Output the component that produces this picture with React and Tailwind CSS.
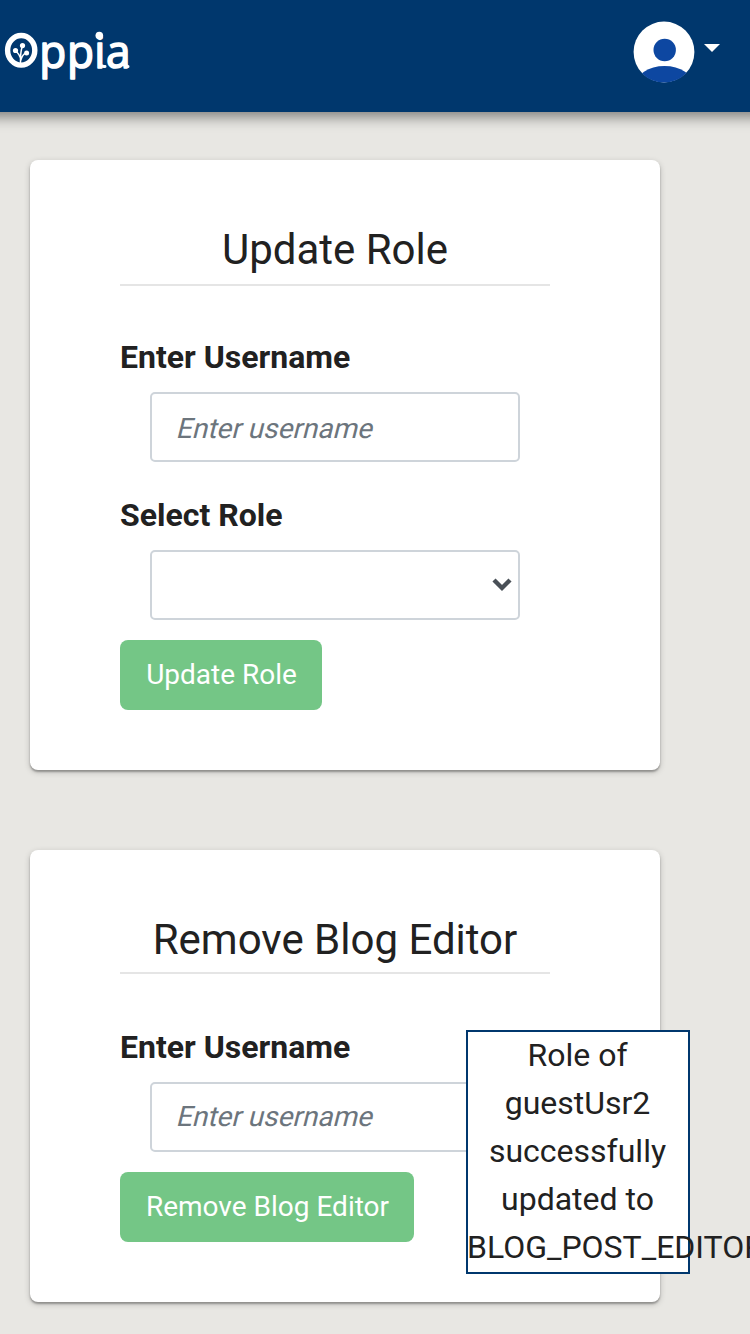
import React from "react";

function Logo() {
  return (
    <svg width="140" height="70" viewBox="0 20 140 70" role="img" aria-label="Oppia">
      <ellipse cx="21.2" cy="50.3" rx="13.6" ry="14.8" fill="none" stroke="#fff" strokeWidth="5.4" />
      <g fill="none" stroke="#fff" strokeWidth="1.5">
        <path d="M20.5 64V58Q19 54 16 51M20.5 60Q20.5 51 22.5 46M20.5 61Q22.5 54 26 53" />
      </g>
      <g fill="#fff">
        <circle cx="15.5" cy="50.5" r="2.6" />
        <circle cx="22.5" cy="45.6" r="2.6" />
        <circle cx="26.6" cy="53" r="2.5" />
      </g>
      <text
        transform="scale(0.96 1)"
        x="41 69.7 98.2 110.4"
        y="67.8"
        fill="#fff"
        stroke="#fff"
        strokeWidth="1.6"
        strokeLinejoin="round"
        className="font-['Open_Sans',sans-serif] text-[46px] font-normal"
      >
        ppia
      </text>
      <circle cx="99.3" cy="35.5" r="3.8" fill="#fff" />
      <path d="M100 64Q101 66.8 105 66.4M125.6 64Q126 66.4 128 66.6" fill="none" stroke="#fff" strokeWidth="3" strokeLinecap="round" />
    </svg>
  );
}

function Header() {
  return (
    <header className="relative -mx-10 flex h-28 items-start justify-between bg-[#00376d] px-10 shadow-[0_4px_13px_1px_rgba(0,0,0,0.45)]">
      <div className="pt-5">
        <Logo />
      </div>
      <div className="flex items-start gap-[9px] pr-[30px] pt-[21px]">
        <svg width="62" height="62" viewBox="0 0 62 62">
          <defs>
            <clipPath id="avatar">
              <circle cx="31" cy="31" r="30.6" />
            </clipPath>
          </defs>
          <circle cx="31" cy="31" r="30.4" fill="#fff" />
          <circle cx="31.7" cy="29" r="11.2" fill="#0d47a1" />
          <ellipse cx="31.5" cy="64.5" rx="29" ry="19.5" fill="#0d47a1" clipPath="url(#avatar)" />
        </svg>
        <svg className="mt-[23px]" width="16" height="8" viewBox="0 0 16 8">
          <path d="M0 0H16L8 8Z" fill="#fff" />
        </svg>
      </div>
    </header>
  );
}

function Card({ title, className, headingClass, children }) {
  return (
    <section
      className={`w-[630px] rounded-lg bg-white pl-[90px] pr-[110px] pt-[65px] shadow-[0_2px_6px_rgba(0,0,0,0.2),0_2px_2px_rgba(0,0,0,0.28)] ${className}`}
    >
      <h2 className={`border-b-2 border-[#e5e5e5] text-center text-[42px] leading-[50px] ${headingClass}`}>{title}</h2>
      {children}
    </section>
  );
}

function Label({ children, className }) {
  return <label className={`block text-[32px] leading-[48px] font-bold ${className}`}>{children}</label>;
}

function UsernameInput({ className }) {
  return (
    <div className={`ml-[30px] h-[70px] w-[370px] rounded-[5px] border-2 border-[#ced4da] px-[26px] ${className}`}>
      <input
        placeholder="Enter username"
        className="block h-16 w-full -skew-x-[14deg] bg-transparent text-[28px] outline-none placeholder:text-[#6c757d] placeholder:opacity-100"
      />
    </div>
  );
}

function Button({ children, className }) {
  return (
    <button className={`mt-5 block h-[70px] rounded-lg bg-[#74c686] pl-px text-center text-[28px] text-white ${className}`}>
      {children}
    </button>
  );
}

export default function App() {
  return (
    <div className="relative h-[1334px] w-[750px] overflow-hidden bg-[#e8e7e3] font-['Roboto',sans-serif] text-[#212121]">
      <Header />
      <main className="flex flex-col gap-20 pl-[30px] pt-12">
        <Card title="Update Role" className="h-[610px]" headingClass="h-[61px]">
          <Label className="mt-[47px]">Enter Username</Label>
          <div className="mt-[11px]">
            <UsernameInput className="pt-[2px]" />
          </div>
          <Label className="mt-[29px]">Select Role</Label>
          <div className="ml-[30px] mt-[11px] flex h-[70px] w-[370px] items-center justify-end rounded-[5px] border-2 border-[#ced4da] pr-[6px]">
            <svg width="20" height="14" viewBox="0 0 20 14">
              <path d="M2 2L10 10L18 2" fill="none" stroke="#495057" strokeWidth="4.4" />
            </svg>
          </div>
          <Button className="w-[202px]">Update Role</Button>
        </Card>
        <Card title="Remove Blog Editor" className="h-[452px]" headingClass="h-[59px]">
          <Label className="mt-[49px]">Enter Username</Label>
          <div className="mt-[11px]">
            <UsernameInput className="pt-0" />
          </div>
          <Button className="w-[294px]">Remove Blog Editor</Button>
        </Card>
      </main>
      <div
        role="status"
        className="absolute left-[466px] top-[1030px] h-[244px] w-[224px] border-2 border-[#00376d] bg-white text-center text-[32px] leading-[48px]"
      >
        <p className="-ml-px -mt-px">Role of guestUsr2 successfully updated to BLOG_POST_EDITOR</p>
      </div>
    </div>
  );
}
